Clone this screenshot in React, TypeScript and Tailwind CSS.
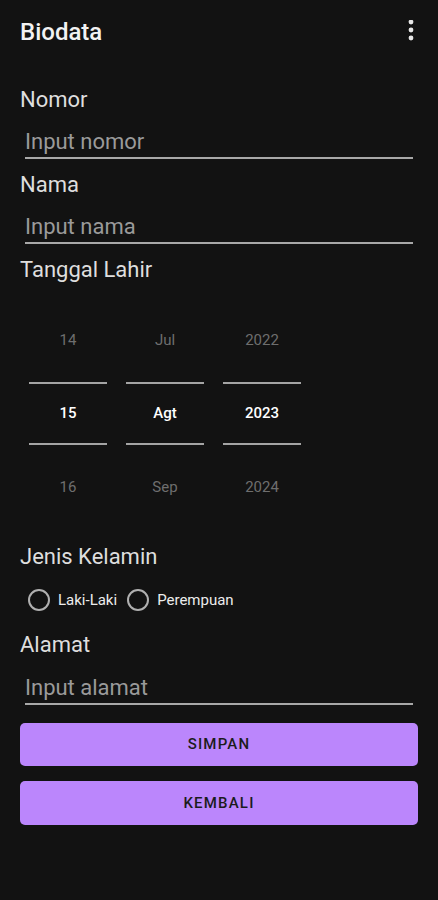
const labelCls = 'text-[22px] leading-6 text-[#dedede]';

function Label({ children, className = '' }: { children: React.ReactNode; className?: string }) {
  return <div className={`${labelCls} ${className}`}>{children}</div>;
}

function TextField({ placeholder, className = '' }: { placeholder: string; className?: string }) {
  return (
    <div className={`mx-[5px] border-b-2 border-[#a8a8a8] pb-px ${className}`}>
      <input
        type="text"
        placeholder={placeholder}
        className="block h-7 w-full bg-transparent p-0 text-[22px] leading-7 text-[#e0e0e0] outline-none placeholder:text-[#9a9a9a]"
      />
    </div>
  );
}

function PickerColumn({ prev, value, next }: { prev: string; value: string; next: string }) {
  return (
    <div className="flex w-[78px] flex-col text-[15px]">
      <div className="flex h-[84px] items-center justify-center text-[#6e6e6e]">{prev}</div>
      <div className="h-[2px] bg-[#a4a4a4]" />
      <div className="flex h-[59px] items-center justify-center font-medium text-white">{value}</div>
      <div className="h-[2px] bg-[#a4a4a4]" />
      <div className="flex h-[84px] items-center justify-center text-[#6e6e6e]">{next}</div>
    </div>
  );
}

function Radio({ label }: { label: string }) {
  return (
    <label className="flex items-center">
      <span className="h-[22px] w-[22px] rounded-full border-2 border-[#b0b0b0]" />
      <span className="ml-[8px] text-[15px] text-[#ececec]">{label}</span>
    </label>
  );
}

export default function App() {
  return (
    <div
      className="h-[900px] w-[438px] bg-[#121212] text-white"
      style={{ fontFamily: 'Roboto, "Noto Sans", sans-serif' }}
    >
      <header className="flex h-16 items-center justify-between pl-5 pr-[15px]">
        <h1 className="text-[24px] font-medium text-[#f2f2f2]">Biodata</h1>
        <svg width="24" height="24" viewBox="0 2 24 24" fill="#e6e6e6">
          <circle cx="12" cy="4" r="2.4" />
          <circle cx="12" cy="12" r="2.4" />
          <circle cx="12" cy="20" r="2.4" />
        </svg>
      </header>

      <div className="flex flex-col px-5">
        <Label className="mt-6">Nomor</Label>
        <TextField placeholder="Input nomor" className="mt-4" />

        <Label className="mt-[14px]">Nama</Label>
        <TextField placeholder="Input nama" className="mt-4" />

        <Label className="mt-[14px]">Tanggal Lahir</Label>
        <div className="mt-4 ml-[9px] flex gap-[19px]">
          <PickerColumn prev="14" value="15" next="16" />
          <PickerColumn prev="Jul" value="Agt" next="Sep" />
          <PickerColumn prev="2022" value="2023" next="2024" />
        </div>

        <Label className="mt-4">Jenis Kelamin</Label>
        <div className="mt-[11px] ml-[8px] flex h-10 items-center gap-[10px]">
          <Radio label="Laki-Laki" />
          <Radio label="Perempuan" />
        </div>

        <Label className="mt-[13px]">Alamat</Label>
        <TextField placeholder="Input alamat" className="mt-[17px]" />

        <button
          type="button"
          className="mt-[18px] h-[43px] rounded-[5px] bg-[#bb86fc] text-[15px] font-medium tracking-[1.2px] text-[#1c1c1c]"
        >
          SIMPAN
        </button>
        <button
          type="button"
          className="mt-[15px] h-[44px] rounded-[5px] bg-[#bb86fc] text-[15px] font-medium tracking-[1.2px] text-[#1c1c1c]"
        >
          KEMBALI
        </button>
      </div>
    </div>
  );
}
